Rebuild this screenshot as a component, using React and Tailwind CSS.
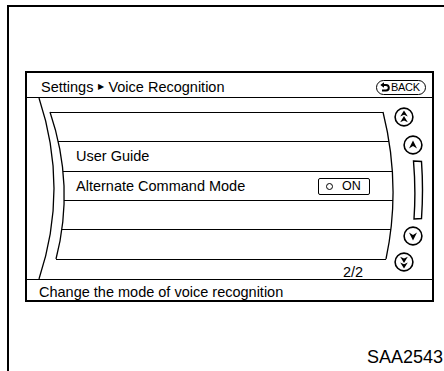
import React from "react";

/* ---------- small drawings ---------- */

function Arrowheads({ double, down }) {
  const single = "M10 5.5 L14 13.5 L10 11 L6 13.5 Z";
  const two = "M10 3.5 L13.8 9.6 L10 7.8 L6.2 9.6 Z M10 9 L13.8 15.2 L10 13.4 L6.2 15.2 Z";
  return (
    <svg width="20" height="20" viewBox="0 0 20 20" className="block">
      <circle cx="10" cy="10" r="8.9" fill="white" stroke="black" strokeWidth="1.6" />
      <path
        d={double ? two : single}
        fill="black"
        transform={down ? "rotate(180 10 10)" : undefined}
      />
    </svg>
  );
}

function ScrollBar() {
  return (
    <svg width="12" height="60" viewBox="0 0 12 60" className="block">
      <path
        d="M1.5 1 L9.5 1.5 Q11.5 30 9.5 58.5 L2 59 Q4 30 1.5 1 Z"
        fill="white"
        stroke="black"
        strokeWidth="1.4"
      />
    </svg>
  );
}

function BackIcon() {
  return (
    <svg width="10" height="10" viewBox="0 0 10 10" className="block">
      <path d="M3 3 H6 A2.8 2.8 0 0 1 6 8.6 H2" fill="none" stroke="black" strokeWidth="2" />
      <path d="M0.3 3 L4 0.2 L4 5.8 Z" fill="black" />
    </svg>
  );
}

/* ---------- list rows ---------- */

function Line({ className }) {
  return <div className={"h-px bg-black " + className} />;
}

export default function App() {
  return (
    <div className="w-[444px] h-[371px] bg-white overflow-hidden text-black font-['Liberation_Sans',Arial,sans-serif]">
      <div className="ml-[7px] mt-[5px] w-[460px] h-[366px] border-l-2 border-t-2 border-black">
        {/* screen */}
        <div className="ml-[16px] mt-[64px] w-[409px] h-[231px] border-2 border-black flex flex-col">
          {/* header */}
          <div className="h-[25px] shrink-0 border-b border-black flex items-center justify-between pl-[14px] pr-[6px] pt-[4px]">
            <div className="text-[14.5px] leading-none whitespace-nowrap flex items-center">
              Settings
              <span className="text-[8px] ml-[5px] mr-[4px]">▶</span>
              Voice Recognition
            </div>
            <div className="h-[15px] w-[50px] rounded-full border border-black flex items-center gap-[1px] pl-[3px]">
              <BackIcon />
              <span className="text-[11px] leading-none tracking-[-0.3px]">BACK</span>
            </div>
          </div>

          {/* body */}
          <div className="h-[181px] shrink-0 flex">
            <div className="relative w-[367px] shrink-0">
              <svg
                width="367"
                height="181"
                viewBox="0 0 367 181"
                className="absolute left-0 top-0 pointer-events-none"
              >
                <g fill="none" stroke="black" strokeWidth="1.3">
                  <path d="M12 0 Q42 90.5 12 181" />
                  <path d="M23 14 Q48 88 29 161" />
                  <path d="M356 14 Q374.5 88 359 161" />
                </g>
              </svg>

              <div className="pt-[14px] text-[14.5px] leading-none">
                <Line className="ml-[23px] w-[333px]" />
                <div className="h-[28px]" />
                <Line className="ml-[31px] w-[331px]" />
                <div className="h-[29px] flex items-center pl-[49px]">User Guide</div>
                <Line className="ml-[36px] w-[329px]" />
                <div className="h-[28px] flex items-center justify-between pl-[49px] pr-[24px]">
                  <span>Alternate Command Mode</span>
                  <div className="w-[52px] h-[17px] border border-black rounded-[2px] flex items-center pl-[7px]">
                    <div className="w-[7px] h-[7px] rounded-full border border-black" />
                    <span className="ml-[9px] text-[12.5px]">ON</span>
                  </div>
                </div>
                <Line className="ml-[37px] w-[329px]" />
                <div className="h-[28px]" />
                <Line className="ml-[35px] w-[329px]" />
                <div className="h-[29px]" />
                <Line className="ml-[29px] w-[330px]" />
                <div className="pt-[5px] pl-[316px]">2/2</div>
              </div>
            </div>

            {/* scroll controls */}
            <div className="w-[38px] shrink-0 flex flex-col pt-[9px]">
              <div>
                <Arrowheads double />
              </div>
              <div className="mt-[8px] ml-[9px]">
                <Arrowheads />
              </div>
              <div className="mt-[5px] ml-[18px]">
                <ScrollBar />
              </div>
              <div className="mt-[6px] ml-[9px]">
                <Arrowheads down />
              </div>
              <div className="mt-[6px]">
                <Arrowheads double down />
              </div>
            </div>
          </div>

          {/* footer */}
          <div className="h-[21px] shrink-0 border-t border-black pl-[12px] pt-[5px] text-[14.5px] leading-none whitespace-nowrap">
            Change the mode of voice recognition
          </div>
        </div>

        <div className="mt-[46px] ml-[358px] text-[18px] leading-none whitespace-nowrap">SAA2543</div>
      </div>
    </div>
  );
}
